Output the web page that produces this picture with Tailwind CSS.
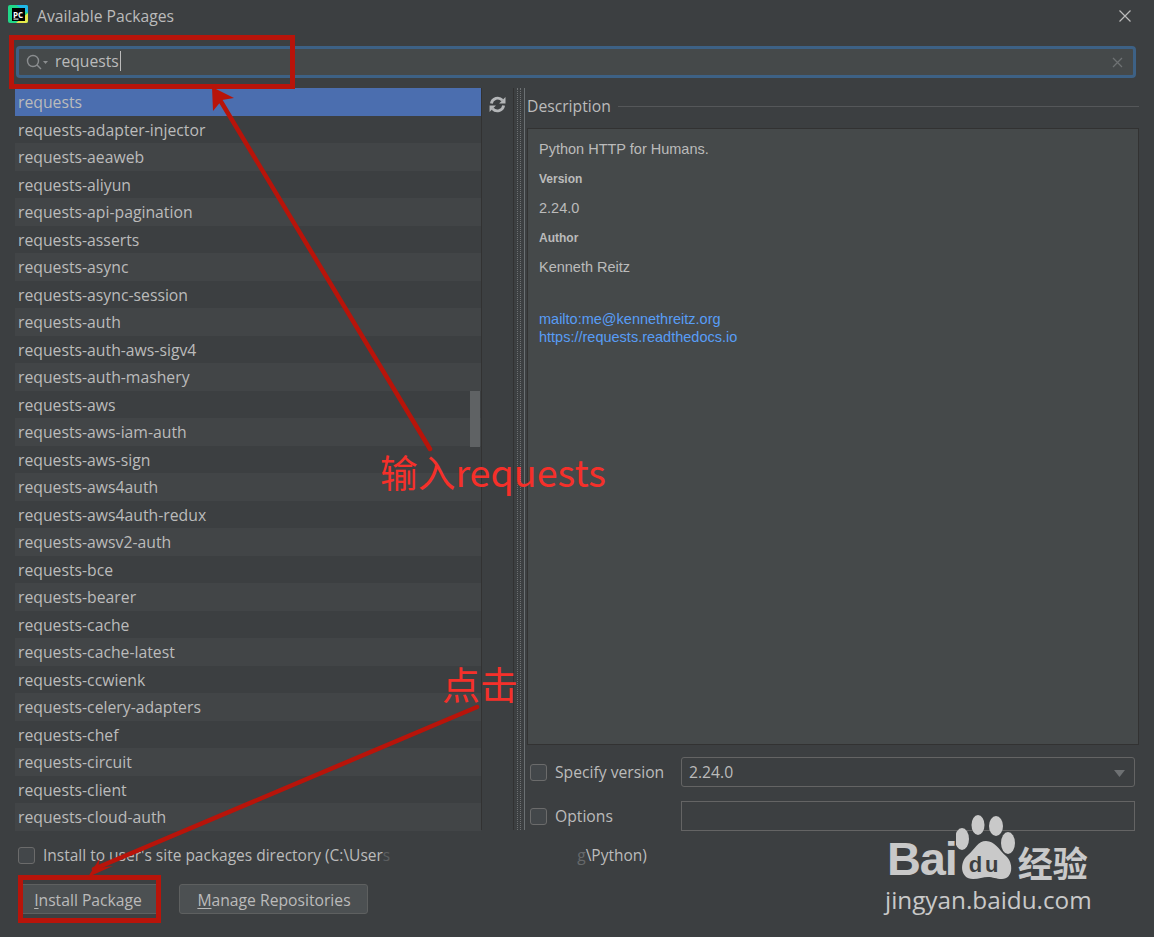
<!DOCTYPE html>
<html lang="zh-CN">
<head>
  <meta charset="UTF-8" />
  <title>Available Packages</title>
  <script src="https://cdn.jsdelivr.net/npm/@tailwindcss/browser@4"></script>
</head>
<body class="bg-[#3c3f41] text-[#bbbbbb] font-['Open_Sans',sans-serif] overflow-hidden">
  <div class="relative w-[1154px] h-[937px] flex flex-col">

    <!-- Title bar -->
    <header class="h-[32px] flex items-center pl-[8px] pr-[22px] shrink-0">
      <svg class="-mt-[2px]" width="20" height="20" viewBox="0 0 20 20">
        <rect x="0" y="0" width="20" height="18" rx="2" fill="#21d789" />
        <path d="M8 0h10a2 2 0 0 1 2 2v6z" fill="#1fb6e8" />
        <path d="M20 8v8a2 2 0 0 1-2 2H8z" fill="#e4e84a" />
        <rect x="4" y="3" width="13" height="13" fill="#000" />
        <rect x="5.500" y="13.500" width="5" height="1.200" fill="#ddd" />
      </svg>
      <span class="absolute left-[13px] top-[10px] text-[8px] leading-[9px] font-bold text-white">PC</span>
      <h1 class="ml-[9px] text-[15.7px] leading-[20px] font-normal">Available Packages</h1>
      <svg class="ml-auto" width="14" height="14" viewBox="0 0 14 14" stroke="#bbbbbb" stroke-width="1.2"><path d="M1.5 1.5 12.5 12.5M12.5 1.5 1.5 12.5" /></svg>
    </header>

    <!-- Search -->
    <div class="h-[56px] shrink-0 pl-[16px] pr-[18px] pt-[14px]">
      <div class="h-[32px] bg-[#45494a] border-[3px] border-[#3d6185] rounded-[4px] flex items-center pl-[6px] pr-[10px]">
        <svg width="24" height="18" viewBox="0 0 24 18" fill="none" stroke="#8a8d8f" stroke-width="1.4">
          <circle cx="8" cy="8" r="5.5" /><path d="M12 12l4 4" />
          <path d="M18 8h5l-2.5 3z" fill="#8a8d8f" stroke="none" />
        </svg>
        <span class="ml-[6px] text-[15.7px] leading-[20px] -mt-[2px] border-r border-[#bbbbbb] pr-px">requests</span>
        <svg class="ml-auto" width="11" height="11" viewBox="0 0 11 11" stroke="#6e7173" stroke-width="1.3"><path d="M1 1l9 9M10 1l-9 9" /></svg>
      </div>
    </div>

    <!-- Main area -->
    <div class="flex h-[742px] shrink-0 pl-[15px] pr-[15px]">
      <ul id="list" class="w-[466px] shrink-0 text-[15.75px]">
        <li class="h-[27.5px] leading-[29px] pl-[3px] bg-[#4b6eaf]">requests</li>
        <li class="h-[27.5px] leading-[29px] pl-[3px] bg-[#3c3f41]">requests-adapter-injector</li>
        <li class="h-[27.5px] leading-[29px] pl-[3px] bg-[#424547]">requests-aeaweb</li>
        <li class="h-[27.5px] leading-[29px] pl-[3px] bg-[#3c3f41]">requests-aliyun</li>
        <li class="h-[27.5px] leading-[29px] pl-[3px] bg-[#424547]">requests-api-pagination</li>
        <li class="h-[27.5px] leading-[29px] pl-[3px] bg-[#3c3f41]">requests-asserts</li>
        <li class="h-[27.5px] leading-[29px] pl-[3px] bg-[#424547]">requests-async</li>
        <li class="h-[27.5px] leading-[29px] pl-[3px] bg-[#3c3f41]">requests-async-session</li>
        <li class="h-[27.5px] leading-[29px] pl-[3px] bg-[#424547]">requests-auth</li>
        <li class="h-[27.5px] leading-[29px] pl-[3px] bg-[#3c3f41]">requests-auth-aws-sigv4</li>
        <li class="h-[27.5px] leading-[29px] pl-[3px] bg-[#424547]">requests-auth-mashery</li>
        <li class="h-[27.5px] leading-[29px] pl-[3px] bg-[#3c3f41]">requests-aws</li>
        <li class="h-[27.5px] leading-[29px] pl-[3px] bg-[#424547]">requests-aws-iam-auth</li>
        <li class="h-[27.5px] leading-[29px] pl-[3px] bg-[#3c3f41]">requests-aws-sign</li>
        <li class="h-[27.5px] leading-[29px] pl-[3px] bg-[#424547]">requests-aws4auth</li>
        <li class="h-[27.5px] leading-[29px] pl-[3px] bg-[#3c3f41]">requests-aws4auth-redux</li>
        <li class="h-[27.5px] leading-[29px] pl-[3px] bg-[#424547]">requests-awsv2-auth</li>
        <li class="h-[27.5px] leading-[29px] pl-[3px] bg-[#3c3f41]">requests-bce</li>
        <li class="h-[27.5px] leading-[29px] pl-[3px] bg-[#424547]">requests-bearer</li>
        <li class="h-[27.5px] leading-[29px] pl-[3px] bg-[#3c3f41]">requests-cache</li>
        <li class="h-[27.5px] leading-[29px] pl-[3px] bg-[#424547]">requests-cache-latest</li>
        <li class="h-[27.5px] leading-[29px] pl-[3px] bg-[#3c3f41]">requests-ccwienk</li>
        <li class="h-[27.5px] leading-[29px] pl-[3px] bg-[#424547]">requests-celery-adapters</li>
        <li class="h-[27.5px] leading-[29px] pl-[3px] bg-[#3c3f41]">requests-chef</li>
        <li class="h-[27.5px] leading-[29px] pl-[3px] bg-[#424547]">requests-circuit</li>
        <li class="h-[27.5px] leading-[29px] pl-[3px] bg-[#3c3f41]">requests-client</li>
        <li class="h-[27.5px] leading-[29px] pl-[3px] bg-[#424547]">requests-cloud-auth</li>
      </ul>

      <!-- Refresh toolbar -->
      <div class="w-[33px] shrink-0 border-x border-[#323232] flex justify-center pt-[8px]">
        <svg width="17" height="17" viewBox="0 0 16 16" fill="none" stroke="#b4b6b8" stroke-width="2.6">
          <path d="M2.2 7A6 6 0 0 1 12.6 4" /><path d="M13.8 9A6 6 0 0 1 3.4 12" />
          <path d="M15.5 1v6h-6z" fill="#b4b6b8" stroke="none" /><path d="M.5 15V9h6z" fill="#b4b6b8" stroke="none" />
        </svg>
      </div>

      <!-- Splitter -->
      <div class="w-[12px] shrink-0 flex pl-[3px]">
        <div class="w-[4px] border-x border-dotted border-[#6d7072]"></div>
        <div class="w-px ml-[3px] bg-[#6b7073]"></div>
      </div>

      <!-- Description -->
      <section class="flex-1 flex flex-col">
        <div class="h-[41px] flex items-center shrink-0 -mt-[2px] mb-[1px]">
          <span class="text-[15.7px] pl-[1px]">Description</span>
          <div class="flex-1 h-px bg-[#555759] ml-[7px]"></div>
        </div>
        <div class="h-[617px] shrink-0 ml-[1px] bg-[#45494a] border border-[#323232] pl-[11px] font-['Liberation_Sans',sans-serif] text-[14.5px]">
          <p class="mt-[12px] leading-[16px]">Python HTTP for Humans.</p>
          <p class="mt-[15px] text-[12px] leading-[14px] font-bold">Version</p>
          <p class="mt-[14px] leading-[16px]">2.24.0</p>
          <p class="mt-[15px] text-[12px] leading-[14px] font-bold">Author</p>
          <p class="mt-[14px] leading-[16px]">Kenneth Reitz</p>
          <p class="mt-[35px] leading-[18px] text-[#589df6]">mailto:me@kennethreitz.org</p>
          <p class="leading-[18px] text-[#589df6]">https://requests.readthedocs.io</p>
        </div>
        <div class="flex items-center h-[30px] mt-[12px] pl-[4px] shrink-0">
          <div class="w-[17px] h-[17px] border border-[#6b6b6b] rounded-[3px] bg-[#43474a] shrink-0"></div>
          <label class="ml-[8px] mt-[2px] w-[126px] text-[15.7px] shrink-0">Specify version</label>
          <div class="flex-1 h-[30px] mr-[4px] border border-[#646464] rounded-[3px] flex items-center pl-[7px] pr-[9px] pt-[2px] text-[15.7px]">
            2.24.0
            <svg class="ml-auto" width="11" height="7" viewBox="0 0 11 7"><path d="M0 0h11L5.500 7z" fill="#6e7173" /></svg>
          </div>
        </div>
        <div class="flex items-center h-[30px] mt-[14px] pl-[4px] shrink-0">
          <div class="w-[17px] h-[17px] border border-[#6b6b6b] rounded-[3px] bg-[#43474a] shrink-0"></div>
          <label class="ml-[8px] mt-[2px] w-[126px] text-[15.7px] shrink-0">Options</label>
          <div class="flex-1 h-[30px] mr-[4px] border border-[#646464]"></div>
        </div>
      </section>
    </div>

    <!-- Footer -->
    <footer class="pl-[18px] pt-[15px]">
      <div class="flex items-center h-[20px]">
        <div class="w-[17px] h-[17px] border border-[#6b6b6b] rounded-[3px] bg-[#43474a] shrink-0"></div>
        <span class="ml-[8px] text-[15.5px] leading-[20px] whitespace-nowrap">Install to user's site packages directory (C:\User<span class="text-[#5c5f61]">s</span><span class="inline-block w-[187px]"></span><span class="text-[#66696b]">g</span>\Python)</span>
      </div>
      <div class="flex mt-[19px] gap-[19px] pl-[1px]">
        <button class="w-[141px] h-[30px] bg-[#4c5052] border border-[#5e6060] rounded-[3px] text-[15.7px] leading-[20px] pr-[3px] pt-[2px]"><u class="underline-offset-2">I</u>nstall Package</button>
        <button class="w-[189px] h-[30px] bg-[#4c5052] border border-[#5e6060] rounded-[3px] text-[15.7px] leading-[20px] pl-[1px] pt-[2px]"><u class="underline-offset-2">M</u>anage Repositories</button>
      </div>
    </footer>

    <!-- Scrollbar thumb over the list -->
    <div class="absolute left-[470px] top-[391px] w-[10px] h-[56px] bg-[#5f6264]"></div>

    <!-- Annotations -->
    <div class="absolute left-[9px] top-[35px] w-[286px] h-[54px] border-[5px] border-[#b8140a]"></div>
    <div class="absolute left-[18px] top-[875px] w-[143px] h-[48px] border-[5px] border-[#b8140a]"></div>
    <svg class="absolute left-0 top-0" width="1154" height="937" viewBox="0 0 1154 937" fill="none">
      <path d="M430 449 217 95" stroke="#b8140a" stroke-width="4.500" stroke-linecap="round" />
      <path d="M212 87 234 98 222 100 213 111z" fill="#b8140a" />
      <path d="M477 707 94 869" stroke="#b8140a" stroke-width="4.500" stroke-linecap="round" />
      <path d="M88 877 100 858 98 868 113 866z" fill="#b8140a" />
    </svg>
    <span class="absolute left-[380px] top-[447px] text-[37.7px] leading-[48px] text-[#f5302a] font-['Noto_Sans_CJK_SC','Noto_Sans',sans-serif] whitespace-nowrap">输入requests</span>
    <span class="absolute left-[442px] top-[659px] text-[38px] leading-[48px] text-[#f5302a] font-['Noto_Sans_CJK_SC',sans-serif] whitespace-nowrap">点击</span>

    <!-- Watermark -->
    <div class="absolute left-[887px] top-[815px] w-[210px] text-[#c9c9c9]">
      <div class="flex h-[65px]">
        <span class="text-[47px] leading-[47px] mt-[20px] font-bold font-['Liberation_Sans',sans-serif] tracking-tight">Bai</span>
        <div class="relative w-[60px] h-[65px] shrink-0 -ml-[1px]">
          <svg class="absolute left-0 top-0" width="60" height="65" viewBox="0 0 60 65" fill="#c9c9c9">
            <ellipse cx="22" cy="10" rx="6.500" ry="10" /><ellipse cx="40" cy="11" rx="7" ry="10" />
            <ellipse cx="6" cy="24" rx="7" ry="11" /><ellipse cx="52" cy="28" rx="7" ry="11" />
            <path d="M30 26C22 26 19 34 12 40 3 47 4 64 17 64 23 64 27 62 32 62 37 62 40 64 46 64 57 64 58 48 50 41 43 35 39 26 30 26z" />
          </svg>
          <span class="absolute left-[13px] top-[39px] text-[22px] leading-[22px] tracking-[3px] font-bold text-[#3c3f41] font-['Liberation_Sans',sans-serif]">du</span>
        </div>
        <span class="text-[35px] leading-[42px] mt-[26px] font-bold font-['Noto_Sans_CJK_SC',sans-serif] ml-[2px] whitespace-nowrap">经验</span>
      </div>
      <p class="text-[24.3px] leading-[28px] mt-[6px] -ml-[2px] whitespace-nowrap">jingyan.baidu.com</p>
    </div>
  </div>
</body>
</html>
